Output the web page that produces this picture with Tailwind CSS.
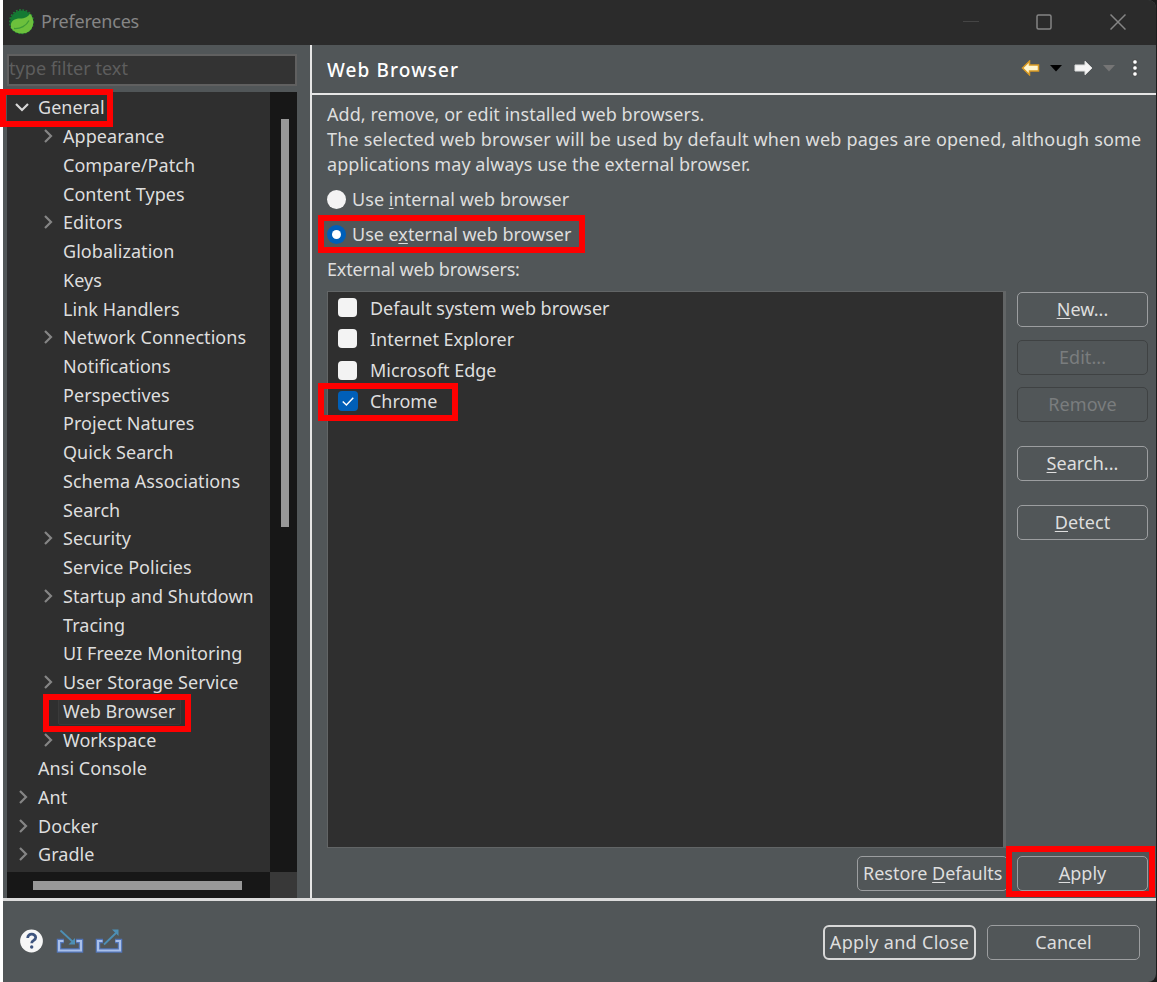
<!DOCTYPE html>
<html lang="en">

<head>
    <meta charset="UTF-8">
    <meta name="viewport" content="width=device-width, initial-scale=1.0">
    <title>Preferences</title>
    <script src="https://cdn.jsdelivr.net/npm/@tailwindcss/browser@4"></script>
</head>

<body class="bg-white">
    <div class="relative w-[1157px] h-[982px] overflow-hidden pl-[3px] font-['Noto_Sans','Noto_Sans_CJK_KR',sans-serif] text-[18px] tracking-[0.05px] text-[#dedede] whitespace-nowrap">
        <div class="h-full bg-[#1c1c1c]">
            <div class="flex flex-col h-full w-[1153px] bg-[#515658] rounded-tr-lg rounded-br-lg overflow-hidden">

                <!-- Title bar -->
                <header class="flex items-center h-[45px] shrink-0 bg-[#2b2b2b] pl-[6px] pb-[2px] text-[#858585]">
                    <svg class="w-[26px] h-[26px]" viewBox="0 0 26 26">
                        <circle cx="12.5" cy="12.700" r="11.800" fill="none" stroke="#1f7a35" stroke-width="1.600" stroke-dasharray="1.800 1.500" />
                        <circle cx="12.5" cy="13" r="11.400" fill="#147a33" />
                        <path d="M2 19C1 12 5 9.500 11 9.500c5 0 8-1.500 10-5 4 4.500 4.500 12 .5 16.500-5 5.500-15 4.500-19.500-2z" fill="#6cc03c" />
                        <path d="M5 19.500c6.500.5 12.500-3 15-8" fill="none" stroke="#3f9c36" stroke-width="1.300" />
                    </svg>
                    <h1 class="ml-[6px] tracking-[-0.2px]">Preferences</h1>
                    <div class="ml-auto flex items-center pr-[27px]">
                        <svg class="w-4 h-4 mr-[57px]" viewBox="0 0 16 16" stroke="#454545"><path d="M0 7.500h16" /></svg>
                        <svg class="w-4 h-4 mr-[58px]" viewBox="0 0 16 16" fill="none" stroke="#858585" stroke-width="1.500"><rect x="1" y="1" width="14" height="14" rx="1.500" /></svg>
                        <svg class="w-4 h-4 mr-[3px]" viewBox="0 0 16 16" stroke="#858585" stroke-width="1.500"><path d="M.5.5l15 15M15.500.5l-15 15" /></svg>
                    </div>
                </header>

                <div class="flex h-[853px] shrink-0">
                    <!-- Sidebar -->
                    <aside class="w-[307px] shrink-0 flex flex-col pl-[4px]">
                        <div class="mt-[9px] w-[290px] h-[32px] border-2 border-[#606060] bg-[#333333] flex items-center pb-[4px] text-[#5e5e5e]">type filter text</div>
                        <div class="mt-[6px] flex w-[290px] h-[780px]">
                            <ul id="tree" class="w-[263px] h-full pt-[1px] bg-[#2f2f2f] overflow-hidden"></ul>
                            <div class="w-[27px] h-full bg-[#171717] flex justify-center pt-[27px]">
                                <div class="w-[8px] h-[408px] ml-[2px] bg-[#989898]"></div>
                            </div>
                        </div>
                        <div class="flex w-[290px] h-[26px]">
                            <div class="w-[263px] bg-[#171717] pl-[26px] pt-[9px]">
                                <div class="w-[209px] h-[9px] bg-[#989898]"></div>
                            </div>
                            <div class="w-[27px] bg-[#383838]"></div>
                        </div>
                    </aside>
                    <div class="w-[2px] shrink-0 bg-[#e6e6e6]"></div>

                    <!-- Web Browser page -->
                    <main class="flex-1 min-w-0">
                        <div class="flex items-center h-[48px] pl-[15px] pr-[17px] text-white">
                            <h2 class="text-[19px] font-medium tracking-[1.1px] mt-[2px]">Web Browser</h2>
                            <div class="ml-auto flex items-center pb-[3px]">
                                <svg class="w-[19px] h-4" viewBox="0 0 19 16"><path d="M1.500 8l7-6.800V5h9v6h-9v3.800z" fill="#fff6d0" stroke="#d99a22" stroke-width="1.500" /></svg>
                                <svg class="w-3 h-2 ml-[10px]" viewBox="0 0 12 8"><path d="M0 1h12L6 7.500z" fill="#000" /></svg>
                                <svg class="w-[19px] h-4 ml-[12px]" viewBox="0 0 19 16"><path d="M18 8l-7-6.800V5H1v6h10v3.800z" fill="#f5f5f5" stroke="#dcdcdc" /></svg>
                                <svg class="w-3 h-2 ml-[10px]" viewBox="0 0 12 8"><path d="M0 1h12L6 7.500z" fill="#757575" /></svg>
                                <svg class="w-2 h-5 ml-[16px]" viewBox="0 0 8 20" fill="#fff" stroke="#3a3a3a" stroke-width=".8"><circle cx="4" cy="4" r="2.300" /><circle cx="4" cy="10" r="2.300" /><circle cx="4" cy="16" r="2.300" /></svg>
                            </div>
                        </div>
                        <div class="h-[2px] bg-[#e6e6e6]"></div>
                        <div class="pl-[15px] pt-[7px]">
                            <p class="leading-[25px]">Add, remove, or edit installed web browsers.<br><span class="tracking-[0.18px]">The selected web browser will be used by default when web pages are opened, although some</span><br>applications may always use the external browser.</p>
                            <div class="mt-[5px] flex flex-col">
                                <label class="h-[35px] flex items-center gap-[6px]"><span class="w-[19px] h-[19px] rounded-full bg-[#f3f3f3]"></span><span>Use <u class="underline-offset-2">i</u>nternal web browser</span></label>
                                <label class="h-[35px] flex items-center gap-[6px] tracking-[-0.01px]"><span class="w-[19px] h-[19px] rounded-full bg-[#005fb8] flex items-center justify-center"><span class="w-[9px] h-[9px] rounded-full bg-white"></span></span><span>Use e<u class="underline-offset-2">x</u>ternal web browser</span></label>
                                <p class="h-[35px] flex items-center tracking-[-0.18px]">External web browsers:</p>
                            </div>
                            <div class="mt-[4px] flex">
                                <div class="w-[679px] h-[557px] border border-[#626566] border-r-3 bg-[#2f2f2f]">
                                    <ul id="browsers" class="pl-[10px]"></ul>
                                </div>
                                <div class="ml-[11px] pt-[1px] flex flex-col w-[131px]">
                                    <button class="h-[35px] border border-[#9c9ea0] rounded-[5px]"><u class="underline-offset-2">N</u>ew...</button>
                                    <button class="mt-[12.5px] h-[35px] border border-[#3f4243] rounded-[5px] text-[#7a7d7e]">Edit...</button>
                                    <button class="mt-[12.5px] h-[35px] border border-[#3f4243] rounded-[5px] text-[#7a7d7e]">Remove</button>
                                    <button class="mt-[24px] h-[35px] border border-[#9c9ea0] rounded-[5px]"><u class="underline-offset-2">S</u>earch...</button>
                                    <button class="mt-[24px] h-[35px] border border-[#9c9ea0] rounded-[5px]"><u class="underline-offset-2">D</u>etect</button>
                                </div>
                            </div>
                            <div class="mt-[8px] flex">
                                <button class="ml-[530px] w-[151px] h-[35px] border border-[#9c9ea0] rounded-[5px] pl-[5px] text-left tracking-[-0.02px]">Restore <u class="underline-offset-2">D</u>efaults</button>
                                <button class="ml-[9px] w-[131px] h-[35px] border border-[#9c9ea0] rounded-[5px]"><u class="underline-offset-2">A</u>pply</button>
                            </div>
                        </div>
                    </main>
                </div>
                <div class="h-[3px] shrink-0 bg-[#dcdcdc]"></div>

                <!-- Dialog buttons -->
                <footer class="flex items-center flex-1 pl-[17px] pr-[16px]">
                    <svg class="w-6 h-6 mb-[2px]" viewBox="0 0 24 24"><circle cx="11.500" cy="12" r="11.400" fill="#f6f6f6" /><path d="M7.700 9c0-5 8-5 8-.4 0 3-4 2.600-4 5.600" fill="none" stroke="#3e547e" stroke-width="2.800" /><circle cx="11.700" cy="18" r="1.700" fill="#3e547e" /></svg>
                    <svg class="w-[28px] h-6 ml-[12px] mb-[2px]" viewBox="0 0 28 24" fill="none"><path d="M8 12H3v9.500h22V12h-5" stroke="#5275b8" stroke-width="4.500" /><path d="M7.500 12H3v9.500h22V12h-4.500" stroke="#a9c0ea" stroke-width="2.200" /><path d="M4.500 1.500l13 12" stroke="#4d8fb5" stroke-width="1.800" /><path d="M19 9v6.500h-6.500z" fill="#4d8fb5" /></svg>
                    <svg class="w-[28px] h-6 ml-[11px] mb-[2px]" viewBox="0 0 28 24" fill="none"><path d="M8 12H3v9.500h22V12h-5" stroke="#5275b8" stroke-width="4.500" /><path d="M7.500 12H3v9.500h22V12h-4.500" stroke="#a9c0ea" stroke-width="2.200" /><path d="M9 15.500L21 4" stroke="#4d8fb5" stroke-width="1.800" /><path d="M17 .5h6.500V7z" fill="#4d8fb5" /></svg>
                    <button class="ml-auto mt-[2px] w-[153px] h-[35px] border-2 border-[#d8d8d8] rounded-md tracking-[0.3px]">Apply and Close</button>
                    <button class="ml-[11px] mt-[2px] w-[153px] h-[35px] border border-[#9c9ea0] rounded-[5px]">Cancel</button>
                </footer>
            </div>
        </div>

        <!-- Highlight frames -->
        <div class="absolute left-0 top-[89px] w-[113px] h-[38px] border-6 border-[#ff0000]"></div>
        <div class="absolute left-[43px] top-[694px] w-[148px] h-[38px] border-6 border-[#ff0000]"></div>
        <div class="absolute left-[318px] top-[215px] w-[267px] h-[38px] border-6 border-[#ff0000]"></div>
        <div class="absolute left-[318px] top-[383px] w-[140px] h-[38px] border-6 border-[#ff0000]"></div>
        <div class="absolute left-[1006px] top-[846px] w-[149px] h-[51px] border-6 border-[#ff0000]"></div>
    </div>

    <script>
        // [label, level, arrow]
        const pages = [
            ["General", 0, "open"],
            ["Appearance", 1, "closed"],
            ["Compare/Patch", 1],
            ["Content Types", 1],
            ["Editors", 1, "closed"],
            ["Globalization", 1],
            ["Keys", 1],
            ["Link Handlers", 1],
            ["Network Connections", 1, "closed"],
            ["Notifications", 1],
            ["Perspectives", 1],
            ["Project Natures", 1],
            ["Quick Search", 1],
            ["Schema Associations", 1],
            ["Search", 1],
            ["Security", 1, "closed"],
            ["Service Policies", 1],
            ["Startup and Shutdown", 1, "closed"],
            ["Tracing", 1],
            ["UI Freeze Monitoring", 1],
            ["User Storage Service", 1, "closed"],
            ["Web Browser", 1],
            ["Workspace", 1, "closed"],
            ["Ansi Console", 0],
            ["Ant", 0, "closed"],
            ["Docker", 0, "closed"],
            ["Gradle", 0, "closed"]
        ];
        const selected = "Web Browser";

        const arrows = {
            open: `<svg class="w-4 h-4" viewBox="0 0 16 16" fill="none" stroke="#d8d8d8" stroke-width="2.2"><path d="M2 5l6 6 6-6" /></svg>`,
            closed: `<svg class="w-4 h-4" viewBox="0 0 16 16" fill="none" stroke="#858585" stroke-width="2.2"><path d="M6 2l6 6-6 6" /></svg>`
        };

        document.getElementById("tree").innerHTML = pages.map(([label, level, arrow]) => `
            <li class="flex items-center h-[28.74px] ${level ? "pl-[32px]" : "pl-[7px]"}">
                <span class="w-[17px] mr-[2px] shrink-0">${arrow ? arrows[arrow] : ""}</span>
                <span class="px-[4px] leading-[26px] border rounded-xs ${label === selected ? "border-[#3a3a3a] bg-[#333333]" : "border-transparent"}">${label}</span>
            </li>`).join("");

        const browsers = [
            ["Default system web browser", false],
            ["Internet Explorer", false],
            ["Microsoft Edge", false],
            ["Chrome", true]
        ];

        document.getElementById("browsers").innerHTML = browsers.map(([name, checked]) => `
            <li class="flex items-center h-[31.25px] gap-[12px]">
                ${checked
                    ? `<span class="w-[20px] h-[20px] rounded bg-[#005fb8]"><svg viewBox="0 0 19 19" fill="none" stroke="#fff" stroke-width="1.4"><path d="M4.500 10l3.500 3.300L14.500 6.500" /></svg></span>`
                    : `<span class="w-[19px] h-[19px] mr-[1px] rounded bg-[#f3f3f3]"></span>`}
                <span class="mt-[1px] tracking-[-0.03px]">${name}</span>
            </li>`).join("");
    </script>
</body>

</html>
